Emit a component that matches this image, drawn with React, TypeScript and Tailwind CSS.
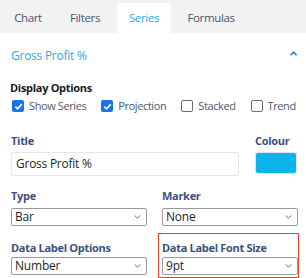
const tabs = [
  { name: "Chart", w: "w-[50px]" },
  { name: "Filters", w: "w-[52px]" },
  { name: "Series", w: "w-[54px]" },
  { name: "Formulas", w: "w-[68px]" },
];

function Check({ checked, label }: { checked: boolean; label: string }) {
  return (
    <label className="flex items-center gap-[5px] whitespace-nowrap">
      {checked ? (
        <span className="flex h-[12px] w-[12px] items-center justify-center rounded-[2px] bg-[#1a73e8]">
          <svg width="9" height="9" viewBox="0 0 10 10" fill="none">
            <path d="M1.5 5.2 4 7.6 8.6 2.4" stroke="white" strokeWidth="1.8" />
          </svg>
        </span>
      ) : (
        <span className="h-[12px] w-[12px] rounded-[2px] border border-[#6b6b6b] bg-white" />
      )}
      <span className="text-[11px] leading-[16px] tracking-[-0.4px] text-[#4d5b70]">{label}</span>
    </label>
  );
}

function Select({ value }: { value: string }) {
  return (
    <div className="flex h-[18px] items-center justify-between rounded-[2px] border border-[#9a9a9a] bg-white pl-[3px] pr-[5px] text-[12px] tracking-[-0.2px] text-[#1f1f1f]">
      <span>{value}</span>
      <svg width="7" height="4" viewBox="0 0 8 5" fill="none">
        <path d="M0.5 0.5 4 4 7.5 0.5" stroke="#555" strokeWidth="1.1" />
      </svg>
    </div>
  );
}

function Label({ children }: { children: string }) {
  return (
    <div className="whitespace-nowrap text-[11px] font-bold leading-[16px] tracking-[-0.3px] text-[#3b5180]">
      {children}
    </div>
  );
}

export default function App() {
  return (
    <div className="h-[278px] w-[306px] overflow-hidden bg-white font-['Open_Sans',sans-serif]">
      <div className="flex h-[33px] items-end gap-[6px] bg-[#f2f2f2] pl-[3px]">
        {tabs.map((t) => (
          <div
            key={t.name}
            className={
              t.name === "Series"
                ? `flex h-[30px] ${t.w} items-center justify-center bg-white text-[11.5px] tracking-[-0.35px] text-[#2fa9ee]`
                : `flex h-[30px] ${t.w} items-center justify-center text-[11.5px] tracking-[-0.35px] text-[#4b5670]`
            }
          >
            {t.name}
          </div>
        ))}
      </div>

      <div className="flex h-[46px] items-center justify-between pl-[11px] pr-[9px]">
        <span className="text-[12px] tracking-[-0.25px] text-[#2fa9ee]">Gross Profit %</span>
        <svg width="7" height="5" viewBox="0 0 8 5" className="-mt-[6px]">
          <path d="M0.5 4.5 4 1 7.5 4.5" stroke="#2f7fd0" strokeWidth="1.8" fill="none" />
        </svg>
      </div>

      <div className="pl-[10px] pr-[9px]">
        <div className="mt-[1px] text-[11px] font-bold leading-[16px] tracking-[-0.3px] text-[#1a1a1a]">
          Display Options
        </div>
        <div className="mt-[2px] flex h-[16px] items-center gap-[15px] pl-[2px]">
          <Check checked label="Show Series" />
          <Check checked label="Projection" />
          <Check checked={false} label="Stacked" />
          <Check checked={false} label="Trend" />
        </div>

        <div className="mt-[19px] flex gap-[16px] pl-[1px]">
          <div className="w-[228px]">
            <Label>Title</Label>
            <div className="mt-[3px] flex h-[24px] items-center rounded-[2px] border border-[#e6e6e6] px-[4px] text-[12px] tracking-[-0.25px] text-[#1f1f1f]">
              Gross Profit %
            </div>
          </div>
          <div className="flex-1">
            <Label>Colour</Label>
            <div className="mt-[3px] h-[22px] w-[42px] rounded-[3px] border border-[#e2e2e2] bg-[#0ab4e8]" />
          </div>
        </div>

        <div className="mt-[12px] grid grid-cols-[136px_136px] gap-[15px] pl-[1px]">
          <div>
            <Label>Type</Label>
            <div className="mt-[4px]">
              <Select value="Bar" />
            </div>
          </div>
          <div>
            <Label>Marker</Label>
            <div className="mt-[4px]">
              <Select value="None" />
            </div>
          </div>
        </div>

        <div className="mt-[14px] grid grid-cols-[136px_136px] gap-[15px] pl-[1px]">
          <div>
            <Label>Data Label Options</Label>
            <div className="mt-[1px]">
              <Select value="Number" />
            </div>
          </div>
          <div className="relative">
            <div className="absolute -left-[4px] -right-[1px] -top-[7px] -bottom-[3px] border-[1.5px] border-[#e8412c]" />
            <Label>Data Label Font Size</Label>
            <div className="mt-[1px]">
              <Select value="9pt" />
            </div>
          </div>
        </div>
      </div>
    </div>
  );
}
